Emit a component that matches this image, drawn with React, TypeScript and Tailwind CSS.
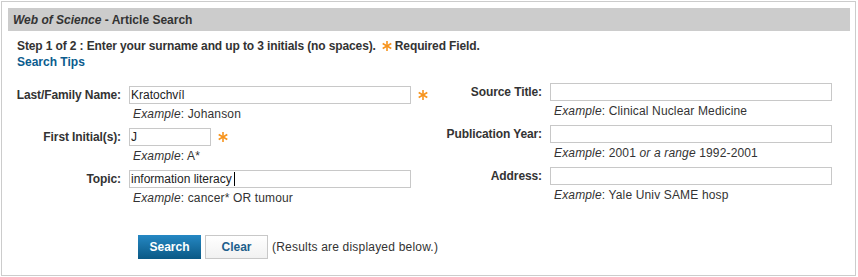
import React from "react";

function Star() {
    return (
        <svg width="10" height="10" viewBox="0 0 10 10" className="shrink-0">
            <g stroke="#f7941d" strokeWidth="1.6" strokeLinecap="butt">
                <line x1="5" y1="0" x2="5" y2="10" />
                <line x1="0.7" y1="2.5" x2="9.3" y2="7.5" />
                <line x1="0.7" y1="7.5" x2="9.3" y2="2.5" />
            </g>
        </svg>
    );
}

type Row = {
    label: string;
    value?: string;
    width: string;
    required?: boolean;
    example: React.ReactNode;
    caret?: boolean;
};

const leftRows: Row[] = [
    { label: "Last/Family Name:", value: "Kratochvíl", width: "w-[282px]", required: true, example: <>Johanson</> },
    { label: "First Initial(s):", value: "J", width: "w-[82px]", required: true, example: <>A*</> },
    { label: "Topic:", value: "information literacy", width: "w-[282px]", example: <>cancer* OR tumour</>, caret: true },
];

const rightRows: Row[] = [
    { label: "Source Title:", width: "w-[282px]", example: <>Clinical Nuclear Medicine</> },
    { label: "Publication Year:", width: "w-[282px]", example: <>2001 <i>or a range</i> 1992-2001</> },
    { label: "Address:", width: "w-[282px]", example: <>Yale Univ SAME hosp</> },
];

function Field({ row, left }: { row: Row; left?: boolean }) {
    return (
        <div className="flex flex-col">
            <div className="flex items-center">
                <label className={`${left ? "w-[121px]" : "w-[110px]"} shrink-0 text-right font-bold text-[#333] pr-[8px] tracking-[-0.1px]`}>{row.label}</label>
                <div className="relative">
                    <input
                        readOnly
                        value={row.value ?? ""}
                        className={`${row.width} h-[18px] border border-[#c8c8c8] bg-white px-[1px] text-[12px] text-[#222] outline-none`}
                        style={{ fontFamily: '"Liberation Sans", Arial, sans-serif' }}
                    />
                    {row.caret && <span className="absolute left-[105px] top-[2px] h-[14px] w-px bg-black" />}
                </div>
                {row.required && <span className="ml-[7px]"><Star /></span>}
            </div>
            <div className={`${left ? "ml-[125px]" : "ml-[114px]"} mt-[3px] leading-[14px] text-[#333] tracking-[0.15px]`}>
                <i>Example</i>: {row.example}
            </div>
        </div>
    );
}

export default function App() {
    return (
        <div
            className="m-[1px] w-[855px] h-[275px] border border-[#cccccc] bg-white pl-[6px] pr-[5px] pt-[6px] text-[12px] text-[#333]"
            style={{ fontFamily: '"Liberation Sans", Arial, sans-serif' }}
        >
            <div className="h-[23px] bg-[#cccccc] pl-[5px] flex items-center font-bold text-[#333]">
                <i>Web of Science</i>&nbsp;- Article Search
            </div>
            <div className="pl-[9px] mt-[7px] leading-[16px] font-bold">
                <div className="flex items-center tracking-[-0.12px]">
                    Step 1 of 2 : Enter your surname and up to 3 initials (no spaces).
                    <span className="ml-[6px] mr-[3px]"><Star /></span>
                    Required Field.
                </div>
                <a className="block text-[#0b5c8e]" href="#">Search Tips</a>
            </div>

            <div className="flex">
                <div className="w-[432px] mt-[16px] flex flex-col">
                    <div className="flex flex-col gap-[7px]">
                        {leftRows.map((r) => (
                            <Field key={r.label} row={r} left />
                        ))}
                    </div>
                    <div className="mt-[30px] ml-[130px] flex items-center">
                        <button className="h-[24px] w-[63px] bg-gradient-to-b from-[#2588c4] to-[#0a5985] font-bold text-white">Search</button>
                        <button className="ml-[4px] h-[24px] w-[63px] border border-[#c8c8c8] bg-gradient-to-b from-white to-[#f1f1f1] font-bold text-[#1d5f8c]">Clear</button>
                        <span className="ml-[4px] tracking-[0.2px]">(Results are displayed below.)</span>
                    </div>
                </div>
                <div className="mt-[13px] flex flex-col gap-[7px]">
                    {rightRows.map((r) => (
                        <Field key={r.label} row={r} />
                    ))}
                </div>
            </div>
        </div>
    );
}
